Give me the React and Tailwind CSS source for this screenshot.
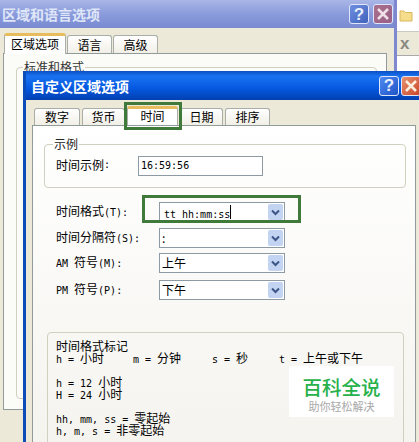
const cjk = "font-['Noto_Sans_CJK_SC','Liberation_Sans',sans-serif]";

// half-width latin text, 6px per character like the old dialog font
function M({ children }) {
    return <span className="text-[10px] whitespace-pre font-['DejaVu_Sans_Mono',monospace]">{children}</span>;
}

function TitleButton({ kind, faded }) {
    const isClose = kind === "close";
    const bg = isClose
        ? faded
            ? "bg-[linear-gradient(135deg,#a8708c,#9a5f86)]"
            : "bg-[linear-gradient(135deg,#e8926e,#c8452a)]"
        : faded
            ? "bg-[linear-gradient(135deg,#6f8fe0,#3f62bc)]"
            : "bg-[linear-gradient(135deg,#4f8af0,#1f55c8)]";
    return (
        <div className={`w-[20px] h-[20px] rounded-[3px] border border-[#dfe6fa] flex items-center justify-center shrink-0 ${bg}`}>
            {isClose ? (
                <svg width="14" height="14" viewBox="0 0 14 14">
                    <path d="M2 2 L12 12 M12 2 L2 12" stroke={faded ? "#efdfe6" : "#fbeedd"} strokeWidth="2.6" />
                </svg>
            ) : (
                <span className="text-[17px] leading-none font-bold text-[#e8effc] font-['Liberation_Sans',sans-serif]">?</span>
            )}
        </div>
    );
}

function Tab({ label, w, active }) {
    if (active) {
        return (
            <div className={`relative z-10 -mb-px h-[19px] -mt-[2px] bg-white border-x border-[#a9aea8] border-t-[3px] border-t-[#e6bc5c] rounded-t-[3px] flex justify-center items-start text-[12px] leading-[13px] text-black ${w} ${cjk}`}>
                {label}
            </div>
        );
    }
    return (
        <div className={`h-[17px] bg-[linear-gradient(#ffffff,#f1efe6)] border-x border-t border-[#a9aea8] rounded-t-[3px] flex justify-center items-center text-[12px] leading-none text-black ${w} ${cjk}`}>
            {label}
        </div>
    );
}

function Combo({ text, mono }) {
    return (
        <div className="w-[126px] h-[20px] bg-white border border-[#8d9aa3] flex items-center pl-[2px] pr-[1px] shrink-0">
            {mono ? (
                <span className="pl-[2px] text-black leading-none"><M>{text}</M></span>
            ) : (
                <span className={`text-[12px] leading-none text-black ${cjk}`}>{text}</span>
            )}
            {mono && <span className="w-px h-[14px] bg-black" />}
            <div className="ml-auto w-[15px] h-[16px] bg-[#c3d3f2] rounded-[2px] flex items-center justify-center">
                <svg width="9" height="7" viewBox="0 0 9 7">
                    <path d="M1 1.5 L4.5 5 L8 1.5" fill="none" stroke="#3d5688" strokeWidth="2" />
                </svg>
            </div>
        </div>
    );
}

function FormRow({ label, text, mono, className }) {
    return (
        <div className={`flex items-center h-[20px] ml-[23px] ${className}`}>
            <div className={`w-[103px] pb-[2px] text-[12px] leading-none text-black ${cjk}`}>{label}</div>
            <Combo text={text} mono={mono} />
        </div>
    );
}

export default function App() {
    return (
        <div className="relative w-[419px] h-[442px] overflow-hidden bg-[#ece9d8]">
            {/* window further behind, right edge */}
            <div className="absolute left-[397px] top-0 w-[22px] h-[72px] bg-white">
                <svg className="absolute left-[2px] top-[9px]" width="14" height="13" viewBox="0 0 14 13">
                    <path d="M1 2 H5 L6.5 3.5 H13 V12 H1 Z" fill="#f6dd8c" stroke="#d9b75c" />
                </svg>
                <div className="h-[31px]" />
                <div className="h-[25px] bg-[#ece9d8] border-t border-[#c9c9c0] border-b border-b-[#aaa] flex items-center pl-[3px] text-[17px] font-bold text-[#8a8a84] font-['Liberation_Sans',sans-serif] leading-none">x</div>
            </div>

            {/* back window */}
            <div className="absolute left-0 top-0 w-[397px] h-[412px] border-r-[3px] border-[#7d88cf] bg-[#ece9d8]">
                <div className="h-[28px] bg-[linear-gradient(#a9b6e6,#8a9bdc_50%,#7a8ad0)] flex items-center pl-[2px] pr-[1px]">
                    <div className={`text-[14px] font-bold text-[#dfe6f8] leading-none ${cjk}`}>区域和语言选项</div>
                    <div className="ml-auto flex gap-[4px]">
                        <TitleButton kind="help" faded />
                        <TitleButton kind="close" faded />
                    </div>
                </div>
                <div className="pl-[3px] pt-[6px]">
                    <div className="flex gap-[1px] pl-[1px] h-[19px]">
                        <div className={`relative z-10 w-[62px] h-[21px] -mt-[1px] bg-white border-x border-[#a9aea8] border-t-[3px] border-t-[#e6bc5c] rounded-t-[3px] text-center text-[12px] leading-[15px] text-black ${cjk}`}>区域选项</div>
                        <div className={`w-[45px] mt-[1px] bg-[linear-gradient(#ffffff,#f1efe6)] border-x border-t border-[#a9aea8] rounded-t-[3px] text-center text-[12px] leading-[17px] text-black ${cjk}`}>语言</div>
                        <div className={`w-[45px] mt-[1px] bg-[linear-gradient(#ffffff,#f1efe6)] border-x border-t border-[#a9aea8] rounded-t-[3px] text-center text-[12px] leading-[17px] text-black ${cjk}`}>高级</div>
                    </div>
                    <div className="relative w-[384px] h-[357px] bg-[#fbfbf8] border border-[#919b9c] pt-[13px] pl-[12px]">
                        <div className="relative w-[361px] h-[332px] border border-[#d0d0bf] rounded-[4px]">
                            <span className={`absolute left-[6px] -top-[7px] bg-[#fbfbf8] px-[1px] text-[12px] leading-none text-[#333] ${cjk}`}>标准和格式</span>
                        </div>
                    </div>
                </div>
            </div>

            {/* front window */}
            <div className="absolute left-[23px] top-[71px] w-[400px] h-[371px] border-l-[3px] border-[#0a4db8] bg-[#ece9d8]">
                <div className="h-[29px] bg-[linear-gradient(#0b4fc4,#1a72f0_18%,#0558e0_60%,#0340b0)] flex items-center pl-[5px] pr-[2px]">
                    <div className={`text-[14px] font-bold leading-none text-white ${cjk}`}>自定义区域选项</div>
                    <div className="ml-auto flex gap-[2px]">
                        <TitleButton kind="help" />
                        <TitleButton kind="close" />
                    </div>
                </div>
                <div className="pl-[6px] pt-[8px]">
                    <div className="flex gap-[2px] pl-[2px] h-[17px]">
                        <Tab label="数字" w="w-[46px]" />
                        <Tab label="货币" w="w-[43px]" />
                        <Tab label="时间" w="w-[51px]" active />
                        <Tab label="日期" w="w-[43px]" />
                        <Tab label="排序" w="w-[45px]" />
                    </div>
                    <div className="w-[384px] h-[330px] border border-[#919b9c] bg-[linear-gradient(#ffffff,#f4f3ee)] pt-[18px]">
                        {/* 示例 group */}
                        <div className="relative ml-[11px] w-[362px] h-[44px] border border-[#d0d0bf] rounded-[4px] flex items-start pl-[11px] pt-[11px]">
                            <span className={`absolute left-[8px] -top-[7px] bg-[#fefefe] px-[1px] text-[12px] leading-none text-[#222] ${cjk}`}>示例</span>
                            <div className={`w-[82px] h-[20px] flex items-center pb-[2px] text-[12px] leading-none text-black ${cjk}`}>时间示例<M>:</M></div>
                            <div className="w-[125px] h-[20px] bg-white border border-[#8d9aa3] flex items-center pl-[2px] text-black leading-none"><M>16:59:56</M></div>
                        </div>

                        <FormRow label={<>时间格式<M>(T):</M></>} text="tt hh:mm:ss" mono className="mt-[14px]" />
                        <FormRow label={<>时间分隔符<M>(S):</M></>} text=":" className="mt-[6px]" />
                        <FormRow label={<><M>AM </M>符号<M>(M):</M></>} text="上午" className="mt-[5px]" />
                        <FormRow label={<><M>PM </M>符号<M>(P):</M></>} text="下午" className="mt-[7px]" />

                        {/* 标记 group */}
                        <div className={`ml-[14px] mt-[32px] w-[357px] h-[120px] border border-[#d0d0bf] rounded-[4px] pl-[8px] pt-[7px] text-[12px] leading-[12px] text-black ${cjk}`}>
                            <div className="h-[12px]">时间格式标记</div>
                            <div className="flex h-[12px]">
                                <span className="w-[77px]"><M>h = </M>小时</span>
                                <span className="w-[79px]"><M>m = </M>分钟</span>
                                <span className="w-[67px]"><M>s = </M>秒</span>
                                <span><M>t = </M>上午或下午</span>
                            </div>
                            <div className="h-[12px] mt-[12px]"><M>h = 12 </M>小时</div>
                            <div className="h-[12px]"><M>H = 24 </M>小时</div>
                            <div className="h-[12px] mt-[12px]"><M>hh, mm, ss = </M>零起始</div>
                            <div className="h-[12px]"><M>h, m, s = </M>非零起始</div>
                        </div>
                    </div>
                </div>
            </div>

            {/* green highlight boxes */}
            <div className="absolute left-[124px] top-[102px] w-[58px] h-[28px] border-[3px] border-[#3f7a3a]" />
            <div className="absolute left-[142px] top-[195px] w-[159px] h-[28px] border-[3px] border-[#3f7a3a]" />

            {/* watermark */}
            <div className={`absolute left-[289px] top-[366px] w-[105px] h-[51px] bg-white flex flex-col items-center pt-[10px] ${cjk}`}>
                <div className="text-[19.5px] leading-[22px] font-medium text-[#27b14b]">百科全说</div>
                <div className="text-[11px] leading-[14px] mt-[1px] text-[#a8a8a8]">助你轻松解决</div>
            </div>
        </div>
    );
}
